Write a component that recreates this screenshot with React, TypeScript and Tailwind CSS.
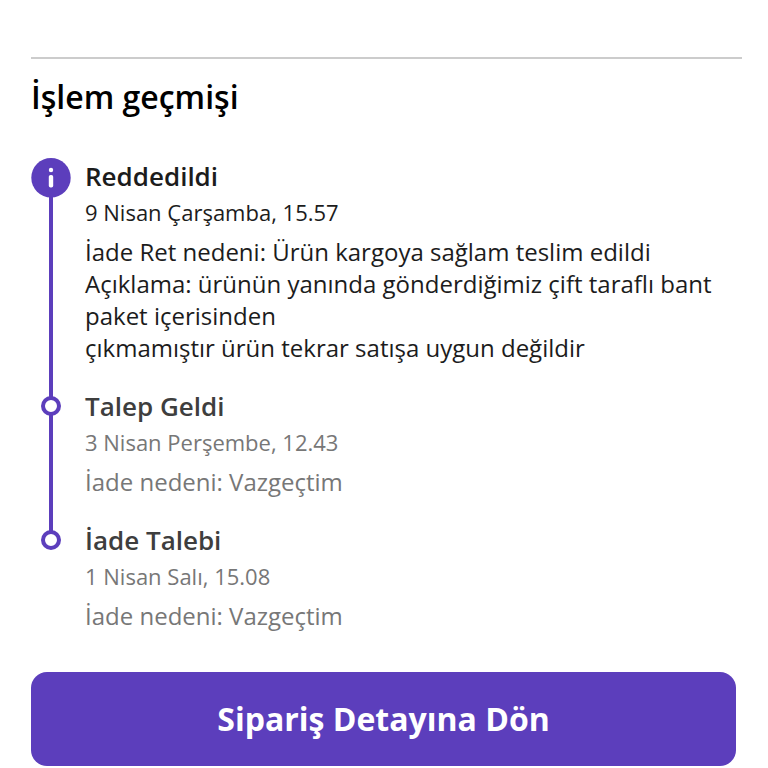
import React from 'react';

interface HistoryEntry {
  title: string;
  date: string;
  lines: string[];
  current?: boolean;
}

const history: HistoryEntry[] = [
  {
    title: 'Reddedildi',
    date: '9 Nisan Çarşamba, 15.57',
    lines: [
      'İade Ret nedeni: Ürün kargoya sağlam teslim edildi',
      'Açıklama: ürünün yanında gönderdiğimiz çift taraflı bant paket içerisinden',
      'çıkmamıştır ürün tekrar satışa uygun değildir',
    ],
    current: true,
  },
  { title: 'Talep Geldi', date: '3 Nisan Perşembe, 12.43', lines: ['İade nedeni: Vazgeçtim'] },
  { title: 'İade Talebi', date: '1 Nisan Salı, 15.08', lines: ['İade nedeni: Vazgeçtim'] },
];

function Marker({ current }: { current?: boolean }) {
  if (!current) {
    return <span className="relative mt-2 block size-5 rounded-full border-4 border-[#5c3ebc] bg-white" />;
  }
  return (
    <svg className="relative size-10" viewBox="0 0 40 40" aria-hidden="true">
      <circle cx="20" cy="19.7" r="19.7" fill="#5c3ebc" />
      <circle cx="20" cy="12" r="2.2" fill="white" />
      <rect x="17.8" y="17" width="4.4" height="12.6" rx="1.8" fill="white" />
    </svg>
  );
}

function TimelineItem({ entry, last }: { entry: HistoryEntry; last: boolean }) {
  return (
    <li className="flex gap-3.5">
      <div className="relative flex w-10 shrink-0 justify-center">
        {!last && <span className="absolute top-5 -bottom-3 w-1 bg-[#5c3ebc]" />}
        <Marker current={entry.current} />
      </div>
      <div className={last ? 'min-w-0' : 'min-w-0 pb-6'}>
        <h2 className={`text-[26px] leading-9 font-semibold ${entry.current ? 'text-[#1c1c1c]' : 'text-[#3e3e3e]'}`}>
          {entry.title}
        </h2>
        <p className={`text-[22px] leading-9 ${entry.current ? 'text-[#1c1c1c]' : 'text-[#777777]'}`}>{entry.date}</p>
        <div className={`mt-1.5 text-2xl ${entry.current ? 'text-[#1c1c1c]' : 'text-[#777777]'}`}>
          {entry.lines.map((line) => (
            <p key={line}>{line}</p>
          ))}
        </div>
      </div>
    </li>
  );
}

export default function App() {
  return (
    <main className="bg-white pt-[57px] pr-[26px] pl-[31px] font-['Open_Sans',sans-serif]">
      <hr className="border-t-2 border-[#cccccc]" />
      <h1 className="mt-4 text-[32px] leading-11 font-semibold text-black">İşlem geçmişi</h1>
      <ol className="mt-[39px]">
        {history.map((entry, index) => (
          <TimelineItem key={entry.title} entry={entry} last={index === history.length - 1} />
        ))}
      </ol>
      <div className="mt-10 pr-1.5">
        <button
          type="button"
          className="h-[94px] w-full rounded-2xl bg-[#5c3ebc] text-[32px] font-bold text-white"
        >
          Sipariş Detayına Dön
        </button>
      </div>
    </main>
  );
}
